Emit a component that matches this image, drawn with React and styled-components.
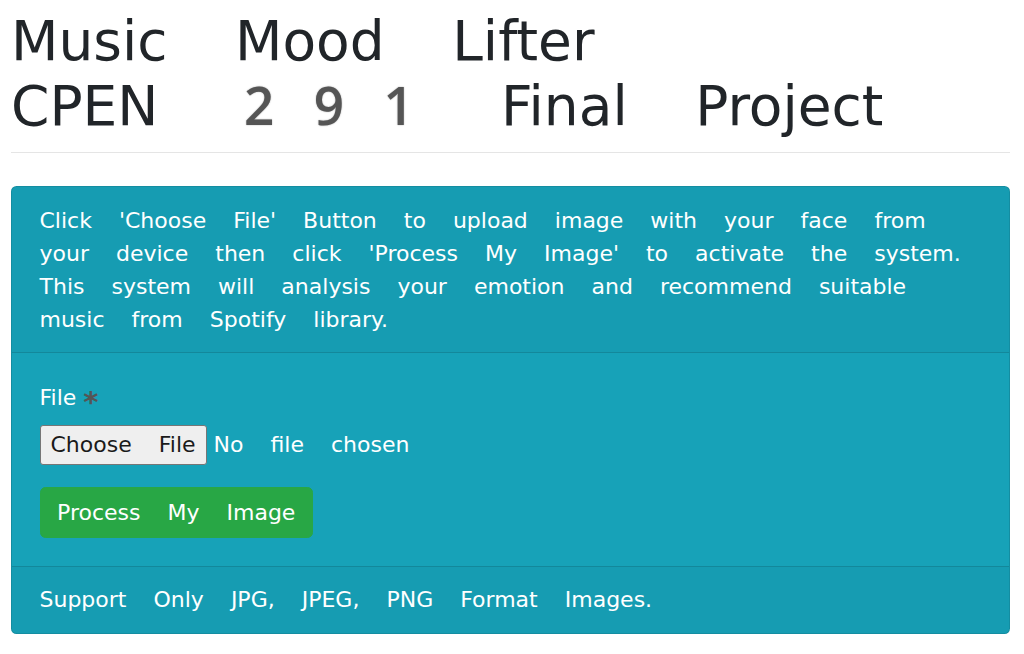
import React from "react";
import styled, { createGlobalStyle } from "styled-components";

const Global = createGlobalStyle`
  html, body { background: #fff; }
  body {
    margin: 9px 14px 0 11px;
    font-family: "DejaVu Sans", sans-serif;
    color: #212529;
  }
`;

const Title = styled.h1`
  margin: 0;
  font-size: 55px;
  font-weight: 400;
  line-height: 65px;
  word-spacing: 0.91em;
  color: #212529;
`;

const TitleLine = styled.span`
  display: block;
  white-space: nowrap;
`;

const Digits = styled.span`
  font-family: "Open Sans", sans-serif;
  font-weight: 600;
  font-size: 53px;
  line-height: 0;
  letter-spacing: 39.5px;
  color: #555;
  text-shadow: 0 0 1.5px rgba(0, 0, 0, 0.4);
  margin-left: 18px;
  margin-right: -20px;
  word-spacing: normal;
`;

const Rule = styled.hr`
  margin: 13px 0 33px;
  border: 0;
  border-top: 1px solid rgba(0, 0, 0, 0.1);
`;

const Card = styled.section`
  display: flex;
  flex-direction: column;
  background: #17a2b8;
  color: #fff;
  border: 1px solid rgba(0, 0, 0, 0.125);
  border-radius: 5.5px;
  overflow: hidden;
  font-size: 22px;
  line-height: 33px;
  word-spacing: 0.91em;
`;

const CardHeader = styled.div`
  padding: 16.5px 27.5px;
  background: rgba(0, 0, 0, 0.03);
  border-bottom: 1px solid rgba(0, 0, 0, 0.125);
`;

const CardBody = styled.form`
  display: flex;
  flex-direction: column;
  align-items: flex-start;
  padding: 27.5px;
`;

const CardFooter = styled.div`
  padding: 16.5px 27.5px;
  background: rgba(0, 0, 0, 0.03);
  border-top: 1px solid rgba(0, 0, 0, 0.125);
`;

const FieldGroup = styled.div`
  display: flex;
  flex-direction: column;
  align-items: flex-start;
  margin-bottom: 22px;
`;

const FieldLabel = styled.label`
  margin-bottom: 11px;
  word-spacing: normal;
`;

const Required = styled.span`
  display: inline-block;
  color: #555;
  font-weight: 700;
  font-size: 29px;
  line-height: 0;
  vertical-align: -7px;
`;

const FilePicker = styled.label`
  display: flex;
  align-items: center;
  gap: 7px;
  cursor: pointer;

  input {
    display: none;
  }
`;

const ChooseButton = styled.span`
  display: inline-flex;
  align-items: center;
  height: 40px;
  box-sizing: border-box;
  padding: 0 10px;
  background: #efefef;
  color: #1a1a1a;
  border: 1px solid #767676;
  border-radius: 3px;
`;

const FileStatus = styled.span`
  color: #fff;
`;

const SubmitButton = styled.button`
  font: inherit;
  word-spacing: inherit;
  color: #fff;
  background: #28a745;
  border: 1px solid #28a745;
  border-radius: 5.5px;
  padding: 8.25px 16.5px;
  line-height: 33px;
  cursor: pointer;
`;

export default function App() {
  return (
    <>
      <Global />
      <Title>
        <TitleLine>Music Mood Lifter</TitleLine>
        <TitleLine>
          CPEN <Digits>291</Digits> Final Project
        </TitleLine>
      </Title>
      <Rule />
      <Card>
        <CardHeader>
          Click 'Choose File' Button to upload image with your face from your
          device then click 'Process My Image' to activate the system. This
          system will analysis your emotion and recommend suitable music from
          Spotify library.
        </CardHeader>
        <CardBody onSubmit={(e) => e.preventDefault()}>
          <FieldGroup>
            <FieldLabel>
              File <Required>*</Required>
            </FieldLabel>
            <FilePicker>
              <input type="file" accept=".jpg,.jpeg,.png" />
              <ChooseButton>Choose File</ChooseButton>
              <FileStatus>No file chosen</FileStatus>
            </FilePicker>
          </FieldGroup>
          <SubmitButton type="submit">Process My Image</SubmitButton>
        </CardBody>
        <CardFooter>Support Only JPG, JPEG, PNG Format Images.</CardFooter>
      </Card>
    </>
  );
}
